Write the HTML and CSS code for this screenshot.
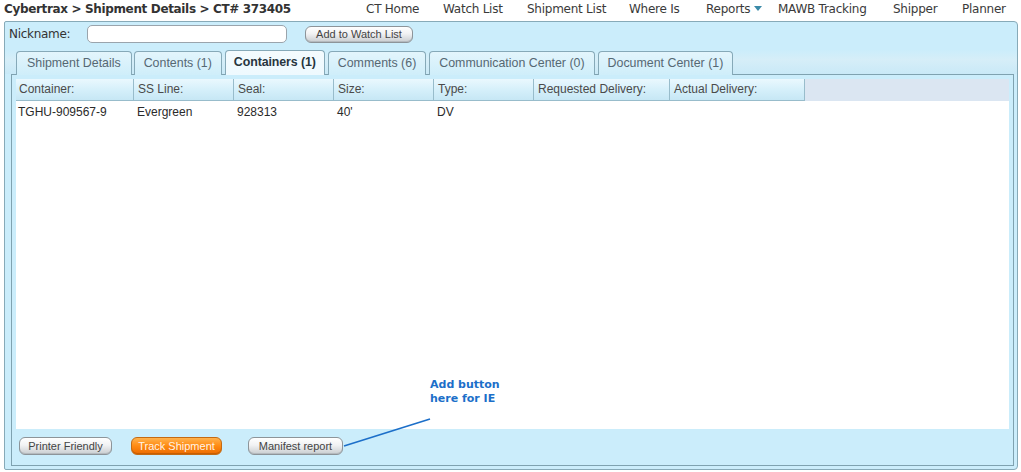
FILE: index.html
```html
<!DOCTYPE html>
<html>
<head>
<meta charset="utf-8">
<title>Cybertrax - Shipment Details</title>
<link rel="stylesheet" href="styles.css">
</head>
<body>
<header class="topbar">
  <div class="crumbs">Cybertrax &gt; Shipment Details &gt; CT# 373405</div>
  <nav class="nav">
    <a class="nav-item">CT Home</a>
    <a class="nav-item">Watch List</a>
    <a class="nav-item">Shipment List</a>
    <a class="nav-item">Where Is</a>
    <a class="nav-item">Reports<svg class="caret" width="8" height="5" viewBox="0 0 8 5"><path d="M0 0H8L4 5Z" fill="#3b8aa8"/></svg></a>
    <a class="nav-item">MAWB Tracking</a>
    <a class="nav-item">Shipper</a>
    <a class="nav-item">Planner</a>
  </nav>
</header>
<main class="panel">
  <div class="nick-row">
    <label class="nick-label">Nickname:</label>
    <input class="nick-input" type="text">
    <button class="btn btn-watch">Add to Watch List</button>
  </div>
  <div class="tabs">
    <div class="tab">Shipment Details</div>
    <div class="tab">Contents (1)</div>
    <div class="tab tab-active">Containers (1)</div>
    <div class="tab">Comments (6)</div>
    <div class="tab">Communication Center (0)</div>
    <div class="tab">Document Center (1)</div>
  </div>
  <section class="tab-panel">
    <div class="grid">
      <div class="grid-head">
        <div class="hcell c1">Container:</div>
        <div class="hcell c2">SS Line:</div>
        <div class="hcell c3">Seal:</div>
        <div class="hcell c4">Size:</div>
        <div class="hcell c5">Type:</div>
        <div class="hcell c6">Requested Delivery:</div>
        <div class="hcell c7">Actual Delivery:</div>
      </div>
      <div class="grid-row">
        <div class="cell c1">TGHU-909567-9</div>
        <div class="cell c2">Evergreen</div>
        <div class="cell c3">928313</div>
        <div class="cell c4">40'</div>
        <div class="cell c5">DV</div>
        <div class="cell c6"></div>
        <div class="cell c7"></div>
      </div>
    </div>
    <div class="actions">
      <button class="btn btn-printer">Printer Friendly</button>
      <button class="btn btn-orange">Track Shipment</button>
      <button class="btn btn-manifest">Manifest report</button>
    </div>
  </section>
  <div class="note">Add button<br>here for IE</div>
  <svg class="note-line" width="90" height="32" viewBox="0 0 90 32"><line x1="1" y1="29" x2="87" y2="2" stroke="#1c6fc9" stroke-width="1.6"/></svg>
</main>
</body>
</html>
```
FILE: styles.css
```css
* { box-sizing: border-box; }
html, body { margin: 0; padding: 0; background: #fff; }
body { width: 1021px; height: 472px; overflow: hidden; font-family: "Liberation Sans", Arial, sans-serif; }

.topbar { display: flex; height: 21px; align-items: flex-start; }
.crumbs {
  width: 366px; padding-left: 4px; padding-top: 1px;
  font-family: "DejaVu Sans", Verdana, sans-serif; font-weight: bold; font-size: 12px;
  color: #333; line-height: 16px; letter-spacing: -0.35px;
}
.nav {
  display: grid;
  grid-template-columns: 77px 84px 102px 77px 72px 115px 69px 50px;
  padding-top: 1px;
}
.nav-item {
  font-family: "DejaVu Sans", Verdana, sans-serif; font-size: 12px; color: #3a3a3a;
  line-height: 16px; white-space: nowrap; letter-spacing: -0.25px;
}
.caret { margin-left: 4px; vertical-align: 2px; }

.panel {
  position: relative;
  margin-left: 4px; width: 1014px; height: 449px;
  border: 1px solid #87aab8; border-radius: 2px 4px 4px 2px;
  background: #cbedfb;
  padding-top: 3px;
}
.nick-row { display: flex; align-items: flex-start; padding-left: 4px; height: 25px; }
.nick-label {
  font-family: "DejaVu Sans", Verdana, sans-serif; font-size: 12px; color: #333;
  width: 78px; line-height: 18px; letter-spacing: -0.3px;
}
.nick-input {
  width: 200px; height: 18px; border: 1px solid #9aa4ac; border-radius: 5px;
  background: #fff; margin: 0; padding: 0 4px;
}
.btn {
  height: 17px; margin: 0; padding: 0 10px;
  border: 1px solid #8d9499; border-radius: 6px;
  background: linear-gradient(#ffffff, #f1f2f3 45%, #c9cdd0);
  font-family: "Liberation Sans", Arial, sans-serif; font-size: 11px; color: #444;
  line-height: 15px; white-space: nowrap;
  box-shadow: inset 0 -1px 0 #b5babe;
}
.btn-watch { width: 108px; margin-left: 18px; margin-top: 1px; padding: 0; }

.tabs {
  display: flex; gap: 3px; padding-left: 11px; height: 24px; margin-top: 0;
  background: linear-gradient(#cbedfb, #d6eef8 40%, #c9e9f7);
  position: relative; z-index: 1;
  align-items: flex-end;
}
.tab {
  height: 24px; padding: 0 9px; border: 1px solid #86a9b8; border-bottom: none;
  border-radius: 4px 4px 0 0;
  background: linear-gradient(#e3f5fc, #cfeefa);
  font-size: 12.4px; color: #566873; line-height: 22px; white-space: nowrap;
  margin-bottom: -1px;
}
.tab:first-child { padding: 0 10px; margin-right: -1px; }
.tab-active {
  height: 25px; padding: 0 8px;
  background: linear-gradient(#f4fbfe, #eef9fe);
  font-weight: bold; color: #27353e; letter-spacing: -0.1px;
}

.tab-panel {
  margin-left: 6px; margin-right: 3px; height: 392px;
  border: 1px solid #7fa2b0; background: #cbedfb;
  padding: 4px 4px 0 4px;
  display: flex; flex-direction: column;
}
.grid { background: #fff; height: 350px; }
.grid-head { display: flex; height: 22px; background: #dbe6f2; }
.hcell {
  height: 22px; border-right: 1px solid #98bccb; border-bottom: 1px solid #98bccb;
  background: linear-gradient(#eaf8fe, #d4effa 55%, #c6e7f5);
  font-size: 12px; color: #4a4a4a; line-height: 21px; padding-left: 4px; white-space: nowrap;
}
.grid-row { display: flex; height: 22px; }
.cell { font-size: 12px; color: #2a2a2a; line-height: 22px; padding-left: 3px; white-space: nowrap; }
.grid-row .c1 { padding-left: 2px; }
.c1 { width: 118px; }
.c2, .c3, .c4, .c5 { width: 100px; }
.c6 { width: 136px; }
.c7 { width: 135px; }
.grid-head .c1 { padding-left: 3px; }

.actions { display: flex; align-items: flex-start; padding-top: 8px; padding-left: 3px; }
.btn-printer { width: 93px; height: 18px; padding: 0; }
.btn-orange {
  width: 91px; height: 18px; padding: 0; margin-left: 19px;
  border-color: #c46a13; color: #fff4e6;
  background: linear-gradient(#ffb24d, #ff8a12 50%, #ec6b00);
  box-shadow: inset 0 -1px 0 #c95e00;
}
.btn-manifest { width: 95px; height: 18px; padding: 0; margin-left: 26px; }

.note {
  position: absolute; left: 425px; top: 356px;
  font-family: "DejaVu Sans", Verdana, sans-serif; font-weight: bold; font-size: 11px;
  color: #1c6fc9; line-height: 14px;
}
.note-line { position: absolute; left: 338px; top: 395px; }
```
